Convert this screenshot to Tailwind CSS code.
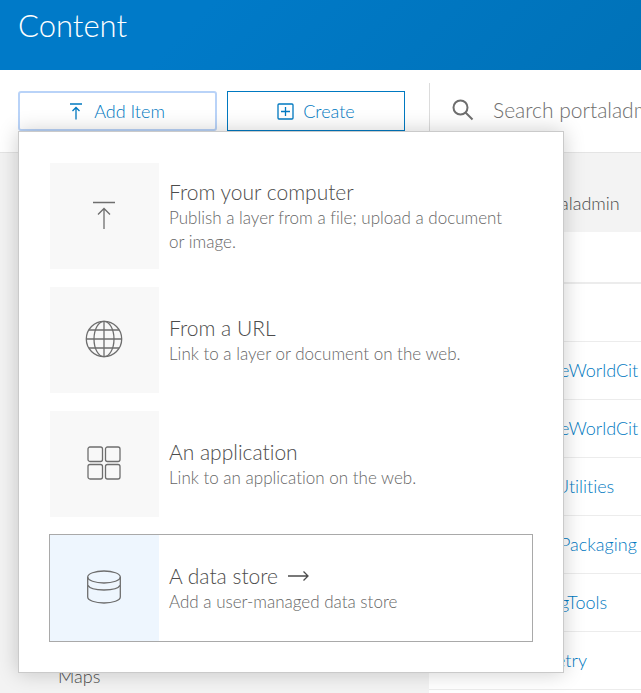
<!DOCTYPE html>
<html lang="en">
<head>
<meta charset="utf-8">
<meta name="viewport" content="width=device-width, initial-scale=1">
<title>Content</title>
<script src="https://cdn.jsdelivr.net/npm/@tailwindcss/browser@4"></script>
</head>
<body class="flex h-screen flex-col overflow-hidden bg-white font-['Lato','Open_Sans',sans-serif] text-[17px] font-light text-[#4c4c4c] [font-variant-ligatures:none]">
<header class="h-[70px] shrink-0 bg-linear-135 from-[#007ac8] from-30% to-[#0072b8] px-[18px] pt-1">
  <h1 class="text-[31px] leading-[42px] font-light text-white">Content</h1>
</header>

<div class="flex h-[83px] shrink-0 border-b border-[#e4e4e4]">
  <div class="relative flex w-[429px] shrink-0 items-start gap-[10px] pt-[21px] pr-6 pl-[18px]">
    <button type="button" aria-expanded="true" class="flex h-10 w-[199px] items-center justify-center gap-3 rounded-[3px] border-2 border-[#b9d3f8] text-[18px] text-[#0079c1]">
      <svg class="h-[18px] w-[12px]" viewBox="0 0 12 18" fill="none" stroke="currentColor" stroke-width="1.3" aria-hidden="true"><path d="M0 2h12M6 17.500V5.500M2.500 9L6 5.500 9.500 9"/></svg>
      Add Item
    </button>
    <button type="button" class="flex h-10 flex-1 items-center justify-center gap-[9px] border border-[#0079c1] text-[18px] text-[#0079c1]">
      <svg class="size-[17px]" viewBox="0 0 17 17" fill="none" stroke="currentColor" stroke-width="1.3" aria-hidden="true"><rect x="1" y="1" width="15" height="15" rx="1"/><path d="M8.500 4v9M4 8.500h9"/></svg>
      Create
    </button>

    <div class="absolute top-[61px] left-[18px] z-10 flex w-[546px] flex-col gap-4 border border-[#cacaca] bg-white p-[30px] shadow-[0_0_20px_rgba(0,0,0,0.2)]">
      <button type="button" class="flex h-[108px] border border-transparent text-left">
        <span class="flex h-full w-[109px] shrink-0 items-center justify-center bg-[#f8f8f8] pr-[2px] pb-[2px] text-[#6e6e6e]">
          <svg class="h-7 w-[22px]" viewBox="0 0 22 28" fill="none" stroke="currentColor" stroke-width="1.300" aria-hidden="true"><path d="M0 1.500h22M11 28V7.500M5 13.500l6-6 6 6"/></svg>
        </span>
        <span class="flex h-full flex-1 flex-col justify-center pl-[10px]">
          <span class="text-[21px] leading-7">From your computer</span>
          <span class="leading-6 text-[#666]">Publish a layer from a file; upload a document<br>or image.</span>
        </span>
      </button>
      <button type="button" class="flex h-[108px] border border-transparent text-left">
        <span class="flex h-full w-[109px] shrink-0 items-center justify-center bg-[#f8f8f8] pr-[2px] pb-[2px] text-[#6e6e6e]">
          <svg class="size-[38px]" viewBox="0 0 38 38" fill="none" stroke="currentColor" stroke-width="1.300" aria-hidden="true"><circle cx="19" cy="19" r="17.700"/><ellipse cx="19" cy="19" rx="10" ry="17.700"/><path d="M19 1v36M1 19h36M4 10h30M4 28h30"/></svg>
        </span>
        <span class="flex h-full flex-1 flex-col justify-center pl-[10px]">
          <span class="text-[21px] leading-7">From a URL</span>
          <span class="leading-6 text-[#666]">Link to a layer or document on the web.</span>
        </span>
      </button>
      <button type="button" class="flex h-[108px] border border-transparent text-left">
        <span class="flex h-full w-[109px] shrink-0 items-center justify-center bg-[#f8f8f8] pr-[2px] pb-[2px] text-[#6e6e6e]">
          <svg class="size-[34px]" viewBox="0 0 34 34" fill="none" stroke="currentColor" stroke-width="1.300" aria-hidden="true"><rect x="1" y="1" width="14.500" height="14.500" rx="2"/><rect x="18.500" y="1" width="14.500" height="14.500" rx="2"/><rect x="1" y="18.500" width="14.500" height="14.500" rx="2"/><rect x="18.500" y="18.500" width="14.500" height="14.500" rx="2"/></svg>
        </span>
        <span class="flex h-full flex-1 flex-col justify-center pl-[10px]">
          <span class="text-[21px] leading-7">An application</span>
          <span class="leading-6 text-[#666]">Link to an application on the web.</span>
        </span>
      </button>
      <button type="button" class="flex h-[108px] border border-[#a9a9a9] text-left">
        <span class="flex h-full w-[109px] shrink-0 items-center justify-center bg-[#eef6fe] pr-[2px] pb-[2px] text-[#6e6e6e]">
          <svg class="size-[34px]" viewBox="0 0 34 34" fill="none" stroke="currentColor" stroke-width="1.300" aria-hidden="true"><ellipse cx="17" cy="7" rx="16.300" ry="6"/><path d="M.7 7v20c0 3.300 7.300 6 16.300 6s16.300-2.700 16.300-6V7M.7 15c1.500 3 8 5 16.300 5s14.800-2 16.300-5"/></svg>
        </span>
        <span class="flex h-full flex-1 flex-col justify-center pl-[10px]">
          <span class="flex items-center gap-[10px] text-[21px] leading-7">A data store
            <svg class="h-[10px] w-[21px]" viewBox="0 0 21 10" fill="none" stroke="currentColor" stroke-width="1.300" aria-hidden="true"><path d="M0 5h20M15.500 .5L20 5l-4.500 4.500"/></svg>
          </span>
          <span class="leading-6 text-[#666]">Add a user-managed data store</span>
        </span>
      </button>
    </div>
  </div>
  <label class="mt-[13px] flex min-w-0 flex-1 items-center gap-[19px] border-l border-[#dcdcdc] pb-4 pl-[22px]">
    <svg class="size-[22px] shrink-0 text-[#6e6e6e]" viewBox="0 0 22 22" fill="none" stroke="currentColor" stroke-width="2" aria-hidden="true"><circle cx="8.500" cy="8.500" r="7"/><path d="M13.500 13.500l7 7"/></svg>
    <input type="text" aria-label="Search" placeholder="Search portaladmin" class="w-full min-w-0 bg-transparent text-[21px] outline-none placeholder:text-[#6e6e6e]">
  </label>
</div>

<main class="flex min-h-0 flex-1">
  <aside class="flex w-[429px] shrink-0 flex-col justify-end bg-[#f3f3f3] pb-[5px] pl-[58px]">
    <a href="#" class="text-[18px] leading-6">Maps</a>
  </aside>
  <section class="min-w-0 flex-1 overflow-hidden whitespace-nowrap">
    <div class="flex h-[79px] items-center bg-[#f3f3f3] pt-[22px] pl-[131px] text-[18px]">aladmin</div>
    <div class="h-[52px] border-b-2 border-[#ececec]"></div>
    <div class="h-[58px] border-b border-[#ececec]"></div>
    <ul class="text-[18px] text-[#0079c1]">
      <li class="flex h-[58px] items-center border-b border-[#ececec] pl-[131px]"><a href="#">eWorldCit</a></li>
      <li class="flex h-[58px] items-center border-b border-[#ececec] pl-[131px]"><a href="#">eWorldCit</a></li>
      <li class="flex h-[58px] items-center border-b border-[#ececec] pl-[127px]"><a href="#">Utilities</a></li>
      <li class="flex h-[58px] items-center border-b border-[#ececec] pl-[131px]"><a href="#">Packaging</a></li>
      <li class="flex h-[58px] items-center border-b border-[#ececec] pl-[131px]"><a href="#">gTools</a></li>
      <li class="flex h-[58px] items-center border-b border-[#ececec] pl-[127px]"><a href="#">etry</a></li>
    </ul>
  </section>
</main>
</body>
</html>
